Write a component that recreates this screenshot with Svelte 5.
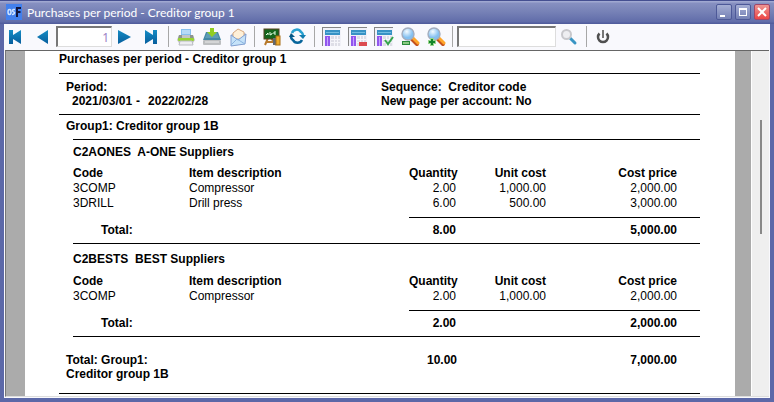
<script>
  const title = 'Purchases per period - Creditor group 1';
  const suppliers = [
    {
      name: 'C2AONES  A-ONE Suppliers',
      rows: [
        ['3COMP', 'Compressor', '2.00', '1,000.00', '2,000.00'],
        ['3DRILL', 'Drill press', '6.00', '500.00', '3,000.00']
      ],
      quantity: '8.00',
      cost: '5,000.00'
    },
    {
      name: 'C2BESTS  BEST Suppliers',
      rows: [['3COMP', 'Compressor', '2.00', '1,000.00', '2,000.00']],
      quantity: '2.00',
      cost: '2,000.00'
    }
  ];
  let page = $state('1');
  let search = $state('');
</script>

{#snippet sheet(kind)}
  <svg width="20" height="20" viewBox="0 0 20 20">
    <path d="M0 0H19V1H1V19H0Z" fill="#858585" />
    <path d="M1 1H19V19H1Z" fill="#f1f1f8" />
    <rect x="3" y="3" width="15" height="5" fill="#3792c5" />
    <rect x="4" y="5" width="13" height="1" fill="#72bde1" />
    <rect x="3" y="9" width="5" height="10" fill="#9256ee" />
    <rect x="5" y="10" width="1" height="9" fill="#c5a5ff" />
    <path d="M9 9h9v10H9z" fill="#dedee7" />
    <path d="M9 12.500h9M9 15.500h9M12.500 9v10M15.500 9v10" stroke="#f6f6fb" />
    {#if kind === 'footer'}<rect x="11" y="15" width="8" height="4" fill="#dc4b50" />{/if}
    {#if kind === 'check'}<path d="m11 13 3 4 5-7" fill="none" stroke="#35a54c" stroke-width="2" />{/if}
  </svg>
{/snippet}

{#snippet lens(sign)}
  <svg width="20" height="20" viewBox="0 0 20 20">
    <path d="m12 12 5 5" stroke="#c4501d" stroke-width="4" stroke-linecap="round" />
    <path d="m13 11 5 5" stroke="#ffa529" stroke-width="3" stroke-linecap="round" />
    <circle cx="8" cy="7" r="6" fill="url(#glass)" stroke="#a3adbf" stroke-width="1.4" />
    {#if sign === '+'}
      <path d="M6 11v8M2 15h8" stroke="#9bd58e" stroke-width="4" />
      <path d="M6 12v6M3 15h6" stroke="#12842a" stroke-width="2" />
    {:else}
      <rect x="2.500" y="14.500" width="7" height="3" fill="#8ccb84" stroke="#2b8b3c" />
    {/if}
  </svg>
{/snippet}

<main class="window">
  <header class="titlebar">
    <svg class="logo" width="16" height="16" viewBox="0 0 16 16" aria-hidden="true">
      <rect width="16" height="16" fill="#4280ed" />
      <ellipse cx="3.500" cy="8" rx="1.500" ry="2.500" fill="none" stroke="#cfe3ff" stroke-width="1.500" />
      <path d="M9 5.500H7.500Q6 6 7 7.500L8.500 8.500Q8.500 10.500 6 10.500" fill="none" stroke="#cfe3ff" stroke-width="1.500" />
      <path d="M11 13V4h4M11 8h3.500" fill="none" stroke="#11153c" stroke-width="2" />
    </svg>
    <h1>{title}</h1>
    <div class="controls">
      <button aria-label="Minimise"><svg width="14" height="14"><path d="M3 11h5" stroke="#fff" stroke-width="2" /></svg></button>
      <button aria-label="Maximise"><svg width="14" height="14"><path d="M3 3h8v8H3zM4 5v5h6V5z" fill="#fff" fill-rule="evenodd" /></svg></button>
      <button class="close" aria-label="Close"><svg width="14" height="14"><path d="m3 3 8 8m0-8-8 8" stroke="#fff" stroke-width="2" /></svg></button>
    </div>
  </header>

  <nav class="toolbar" aria-label="Report tools">
    <svg class="defs" width="0" height="0" aria-hidden="true">
      <defs>
        <linearGradient id="blue" x2="0" y2="1"><stop stop-color="#168cc4" /><stop offset="1" stop-color="#075e9d" /></linearGradient>
        <radialGradient id="glass" cx=".4" cy=".3"><stop stop-color="#f5fbff" /><stop offset="1" stop-color="#83c0f1" /></radialGradient>
      </defs>
    </svg>
    <div class="pager">
      <button aria-label="First page"><svg width="14" height="16"><path d="M0 1h4v5l8-5v14L4 10v5H0z" fill="url(#blue)" /></svg></button>
      <button aria-label="Previous page"><svg width="14" height="16"><path d="M13 1v14L2 8z" fill="url(#blue)" /></svg></button>
      <input class="page" aria-label="Page" bind:value={page} />
      <button aria-label="Next page"><svg width="14" height="16"><path d="M0 1v14l13-7z" fill="url(#blue)" /></svg></button>
      <button aria-label="Last page"><svg width="14" height="16"><path d="M13 1H9v5L1 1v14l8-5v5h4z" fill="url(#blue)" /></svg></button>
    </div>
    <i class="bar"></i>
    <div class="tools">
      <button aria-label="Print"><svg width="20" height="20" viewBox="0 0 20 20">
        <path d="M5 2h10v8H5z" fill="#87c0ee" /><path d="M6 3h8v4H6z" fill="#b6daf6" />
        <path d="M3 8h14l2 5-2 3H3l-2-3z" fill="#c3c6c4" /><path d="M3 8h3v3h8V8h3l1 4H2z" fill="#8e948f" />
        <rect x="2" y="11" width="16" height="3" rx="1" fill="#98d432" /><path d="M4 14h12l1 4H3z" fill="#ececf0" stroke="#b8bbc0" />
      </svg></button>
      <button aria-label="Save"><svg width="20" height="20" viewBox="0 0 20 20">
        <path d="M4 5h12l3 8H1z" fill="#4588a5" /><path d="M5 6h10l2 5H3z" fill="#5d9db6" />
        <rect x="1" y="13" width="18" height="5" rx="1" fill="#bcbec0" /><path d="M3 15h14" stroke="#ececec" />
        <path d="M8 1h4v4h3l-5 5-5-5h3z" fill="#91ce22" />
      </svg></button>
      <button aria-label="E-mail"><svg width="20" height="20" viewBox="0 0 20 20">
        <path d="m3 8 7-6 8 5-1 10-14 2z" fill="#9eb7dd" /><path d="m5 6 5-4 6 3v7H5z" fill="#fff0d8" stroke="#d9aa80" />
        <path d="m3 8 7 5 8-6-1 10-14 2z" fill="#c5e2f9" stroke="#829fd1" /><path d="m3 18 6-6 8 5" fill="none" stroke="#8bb4df" />
      </svg></button>
    </div>
    <i class="bar"></i>
    <div class="tools">
      <button aria-label="Lessons"><svg width="20" height="20" viewBox="0 0 20 20">
        <path d="M6 11 3 18M9 11l5 7M4 15h8" stroke="#b7792c" stroke-width="2" />
        <rect x="2" y="2" width="15" height="10" fill="#14651d" stroke="#574322" />
        <path d="m4 8 2-2v2m2-3v3l2-1v-1m4-1h-2v2h2" fill="none" stroke="#e5ffe5" />
        <rect x="11" y="11" width="4" height="7" fill="#626871" /><rect x="14" y="9" width="4" height="9" fill="#edaa28" stroke="#a56c16" />
      </svg></button>
      <button aria-label="Refresh"><svg width="20" height="20" viewBox="0 0 20 20">
        <path d="M4 6a5 5 0 0 1 9-1q2 1 2 4" fill="none" stroke="#26a0d0" stroke-width="2.500" />
        <path d="M14 13a5 5 0 0 1-9 0q-2-1-2-4" fill="none" stroke="#08659b" stroke-width="2.500" />
        <path d="M11 8h7l-3 4z" fill="#137daf" /><path d="M1 10h6L3 6z" fill="#075784" />
      </svg></button>
    </div>
    <i class="bar"></i>
    <div class="tools">
      <button aria-label="Show header">{@render sheet('plain')}</button>
      <button aria-label="Show footer">{@render sheet('footer')}</button>
      <button aria-label="Apply layout">{@render sheet('check')}</button>
      <button aria-label="Zoom out">{@render lens('-')}</button>
      <button aria-label="Zoom in">{@render lens('+')}</button>
    </div>
    <i class="bar"></i>
    <div class="search">
      <input aria-label="Search report" bind:value={search} />
      <button aria-label="Search"><svg width="18" height="18" viewBox="0 0 18 18">
        <path d="m10 10 5 5" stroke="#3995c4" stroke-width="3" stroke-linecap="round" />
        <circle cx="6.500" cy="6.500" r="4.500" fill="#eeeef1" stroke="#c8c8cc" stroke-width="2" />
      </svg></button>
    </div>
    <i class="bar"></i>
    <button class="power" aria-label="Close report"><svg width="16" height="16" viewBox="0 0 16 16">
      <path d="M4.500 4.500a5 5 0 1 0 7 0" fill="none" stroke="#505050" stroke-width="2.500" />
      <path d="M8 1v8" stroke="#777" stroke-width="2" />
    </svg></button>
  </nav>

  <div class="viewer">
    <article class="paper">
      <h2>{title}</h2>
      <div class="criteria">
        <div><p>Period:</p><p class="dates"><span>2021/03/01</span><span>-</span><span>2022/02/28</span></p></div>
        <div class="options"><p>Sequence:&nbsp; Creditor code</p><p>New page per account: No</p></div>
      </div>
      <h3>Group1: Creditor group 1B</h3>
      {#each suppliers as supplier}
        <section>
          <h4>{supplier.name}</h4>
          <table>
            <colgroup><col class="code" /><col /><col class="qty" /><col class="unit" /><col class="cost" /></colgroup>
            <thead><tr><th>Code</th><th>Item description</th><th>Quantity</th><th>Unit cost</th><th>Cost price</th></tr></thead>
            <tbody>
              {#each supplier.rows as row}
                <tr>{#each row as cell}<td>{cell}</td>{/each}</tr>
              {/each}
            </tbody>
            <tfoot>
              <tr class="gap"><td colspan="2"></td><td class="line" colspan="3"></td></tr>
              <tr class="total"><th colspan="2">Total:</th><td>{supplier.quantity}</td><td></td><td>{supplier.cost}</td></tr>
            </tfoot>
          </table>
        </section>
      {/each}
      <footer>
        <p class="name">Total: Group1:<br />Creditor group 1B</p>
        <p class="qty-sum">10.00</p>
        <p class="cost-sum">7,000.00</p>
      </footer>
    </article>
    <div class="scroll"><i></i></div>
  </div>
</main>

<style>
  :global(body) { background: #5965a5; }
  * { box-sizing: border-box; }
  h1, h2, h3, h4, p { margin: 0; font-size: 12px; font-weight: 700; }
  .window {
    min-height: 100vh;
    display: flex;
    flex-direction: column;
    border: solid #5c68a8;
    border-width: 0 4px 4px;
    font-family: "Liberation Sans", Arial, sans-serif;
    color: #000;
  }
  button { display: grid; place-items: center; padding: 0; border: 0; background: none; }
  svg { display: block; }
  .titlebar {
    height: 24px;
    margin: 0 -4px;
    padding: 0 4px 0 6px;
    display: flex;
    align-items: center;
    gap: 5px;
    background: linear-gradient(#454f91 0 1px, #a0a8d1 1px 2px, #8790c1 3px, #7681b6 12px, #606ca9 22px, #515d9d 23px);
  }
  h1 { flex: 1; font: 12px Lato, "Noto Sans", sans-serif; color: #fff; }
  .controls { display: flex; gap: 3px; }
  .controls button {
    width: 16px;
    height: 16px;
    border: 1px solid #4d5998;
    border-radius: 2px;
    background: linear-gradient(#a5aed4, #7581b5);
  }
  .controls .close { background: linear-gradient(#ee9693, #ed4545); border-color: #a34668; }
  .toolbar {
    height: 26px;
    display: flex;
    align-items: center;
    background: #f9f9fd;
    border-bottom: 1px solid #aaa;
  }
  .defs { position: absolute; }
  .pager { display: flex; align-items: center; gap: 12px; padding: 0 10px 0 5px; }
  .pager .page { width: 56px; margin: 0 -6px 0 -5px; padding: 0 2px; text-align: right; color: #9b80c5; font: 12px "Noto Sans", sans-serif; }
  input {
    height: 21px;
    border: 1px solid #ddd;
    border-top: 2px solid #777;
    border-left: 2px solid #777;
    background: #fff;
    outline: 0;
  }
  .bar { width: 1px; height: 21px; background: #a7a7a7; }
  .tools { display: flex; gap: 6px; padding: 0 6px 0 7px; }
  .search { display: flex; gap: 4px; padding: 0 8px 0 4px; }
  .search input { width: 99px; }
  .power { margin-left: 8px; }
  .viewer {
    flex: 1;
    display: flex;
    margin: 0 1px 1px;
    border-top: 1px solid #666;
    border-left: 1px solid #777;
    border-bottom: 1px solid #ddd;
    background: #ababab;
    outline: 1px solid #f9f9fd;
  }
  .paper { flex: 1; margin: 0 16px 0 19px; padding: 1px 35px 0 34px; background: #fff; font-size: 12px; line-height: 14px; }
  h2, h3, h4, p { line-height: 14px; }
  h2 { height: 22px; border-bottom: 1px solid #000; }
  .criteria { height: 41px; display: flex; padding: 6px 0 0 7px; border-bottom: 1px solid #000; }
  .criteria div:first-child { width: 315px; }
  .dates { display: flex; gap: 4px; padding-left: 6px; }
  .dates span:nth-child(2) { width: 8px; }
  h3 { height: 24px; padding: 4px 0 0 7px; }
  section { margin-left: 14px; border-bottom: 1px solid #000; }
  section:first-of-type { border-top: 1px solid #000; }
  h4 { padding-top: 5px; height: 26px; white-space: pre; }
  section + section h4 { padding-top: 8px; height: 30px; }
  table { width: 100%; table-layout: fixed; border-collapse: collapse; }
  .code { width: 116px; }
  .qty { width: 70px; }
  .unit { width: 90px; }
  .cost { width: 131px; }
  th, td { padding: 0; line-height: 15px; text-align: left; }
  td:nth-child(n + 3), th:nth-child(n + 3) { text-align: right; }
  th:nth-child(n + 3), td:nth-child(n + 3), .total td { padding-right: 23px; }
  .gap td { height: 6px; }
  .gap .line { border-bottom: 1px solid #000; }
  .total { font-weight: 700; }
  .total th { padding-left: 28px; }
  .total td { text-align: right; height: 26px; }
  footer { display: flex; padding: 16px 23px 12px 7px; border-bottom: 1px solid #000; }
  footer .name { flex: 1; }
  footer .cost-sum { width: 220px; text-align: right; }
  .scroll { width: 18px; border-left: 1px solid #fff; background: #efefef; }
  .scroll i { display: block; width: 2px; height: 114px; margin: 69px 0 0 8px; background: #888; }
</style>
